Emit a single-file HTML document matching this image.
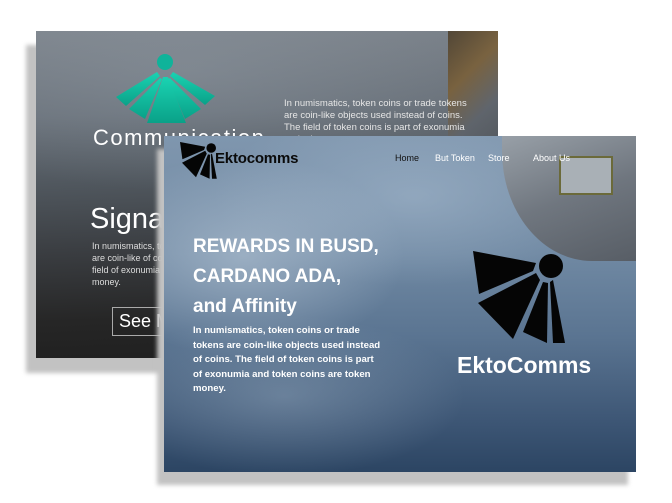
<!DOCTYPE html>
<html><head><meta charset="utf-8"><style>
html,body{margin:0;padding:0;background:#fff;width:672px;height:503px;overflow:hidden;font-family:"Liberation Sans",sans-serif;}
.abs{position:absolute;}
.sh{background:#c2c2c2;filter:blur(2px);}
.back{left:36px;top:31px;width:462px;height:327px;overflow:hidden;
background:
radial-gradient(ellipse 300px 120px at 150px 40px, rgba(150,160,170,.35), transparent),
linear-gradient(178deg,#7d848c 0%,#6a727b 25%,#50575e 45%,#3a3d41 65%,#262626 85%,#1f1f1f 100%);}
.front{left:164px;top:136px;width:472px;height:336px;overflow:hidden;
background:
radial-gradient(ellipse 160px 100px at 80px 120px, rgba(190,205,220,.55), transparent),
radial-gradient(ellipse 200px 90px at 250px 60px, rgba(170,190,210,.5), transparent),
radial-gradient(ellipse 180px 80px at 120px 260px, rgba(150,170,190,.45), transparent),
linear-gradient(180deg,#7f96ae 0%,#7089a3 35%,#5a7491 60%,#3d5675 85%,#2c4563 100%);}
.w{color:#fff;}
</style></head><body>
<div class="abs sh" style="left:26px;top:45px;width:462px;height:328px"></div>
<div class="abs back">
  <div class="abs" style="left:412px;top:0;width:50px;height:105px;background:linear-gradient(135deg,#4a3c28,#7a5e34 40%,#5e636a 75%,#555a60);opacity:.85"></div>
  <svg class="abs" style="left:0;top:0" width="462" height="327">
    <defs><linearGradient id="tg" x1="0" y1="0" x2="0" y2="1"><stop offset="0" stop-color="#1ad3b2"/><stop offset="1" stop-color="#0aa188"/></linearGradient></defs>
    <g transform="translate(-36,-31)">
    <circle cx="165" cy="62" r="8" fill="#0fb39a"/>
    <g fill="url(#tg)">
      <polygon points="116,97 157,72 160,76 126,106"/>
      <polygon points="129,109 160,78 162,79 145,119"/>
      <polygon points="163,77 168,77 186,123 147,123"/>
      <polygon points="201,109 170,78 168,79 185,119"/>
      <polygon points="215,96 173,72 170,76 205,105"/>
    </g>
    </g>
  </svg>
  <div class="abs w" style="left:57px;top:94px;font-size:22px;letter-spacing:1.5px;font-weight:300">Communication</div>
  <div class="abs" style="left:248px;top:67px;width:196px;font-size:9.5px;line-height:12px;color:#e6e6e6">In numismatics, token coins or trade tokens are coin-like objects used instead of coins. The field of token coins is part of exonumia and token</div>
  <div class="abs w" style="left:54px;top:172px;font-size:29px;font-weight:300">Signals</div>
  <div class="abs" style="left:56px;top:209px;width:120px;font-size:9px;line-height:12px;color:#ddd">In numismatics, token tokens are coin-like of coins. The field of exonumia and token money.</div>
  <div class="abs w" style="left:76px;top:276px;width:90px;height:27px;border:1px solid #aaa;font-size:18px;line-height:27px;padding-left:6px">See More</div>
</div>

<div class="abs sh" style="left:157px;top:149px;width:471px;height:336px"></div>
<div class="abs front">
  <div class="abs" style="left:338px;top:0;width:134px;height:125px;background:linear-gradient(160deg,#9aa0a6,#6e737a 50%,#55595f);border-bottom-left-radius:90px 110px;opacity:.9"></div>
  <div class="abs" style="left:395px;top:20px;width:50px;height:35px;border:2px solid #6b6a3a;background:#a9b0b6"></div>
  <svg class="abs" style="left:0;top:0" width="472" height="336">
    <g transform="translate(-164,-136)" fill="#050505">
      <circle cx="551" cy="266" r="12"/>
      <polygon points="473,251 536,263 533,271 479,294"/>
      <polygon points="536,273 478,303 513,339 540,280"/>
      <polygon points="543,282 523,332 547,343 548,283"/>
      <polygon points="550,282 553,343 565,343 553,280"/>
    </g>
    <g transform="translate(16,6) scale(0.4) translate(-473,-251)" fill="#050505">
      <circle cx="551" cy="266" r="12"/>
      <polygon points="473,251 536,263 533,271 479,294"/>
      <polygon points="536,273 478,303 513,339 540,280"/>
      <polygon points="543,282 523,332 547,343 548,283"/>
      <polygon points="550,282 553,343 565,343 553,280"/>
    </g>
  </svg>
  <div class="abs" style="left:51px;top:14px;font-size:15px;font-weight:bold;color:#0a0a0a;letter-spacing:-.2px">Ektocomms</div>
  <div class="abs" style="left:231px;top:17px;font-size:9px;color:#111">Home</div>
  <div class="abs" style="left:271px;top:17px;font-size:9px;color:#fff">But Token</div>
  <div class="abs" style="left:324px;top:17px;font-size:9px;color:#fff">Store</div>
  <div class="abs" style="left:369px;top:17px;font-size:9px;color:#fff">About Us</div>
  <div class="abs w" style="left:29px;top:96px;font-size:19px;font-weight:bold;line-height:30px">REWARDS IN BUSD,<br>CARDANO ADA,<br>and Affinity</div>
  <div class="abs w" style="left:29px;top:188px;width:190px;font-size:9.6px;font-weight:bold;line-height:14.5px">In numismatics, token coins or trade tokens are coin-like objects used instead of coins. The field of token coins is part of exonumia and token coins are token money.</div>
  <div class="abs w" style="left:293px;top:216px;font-size:23px;font-weight:bold">EktoComms</div>
</div>
</body></html>
